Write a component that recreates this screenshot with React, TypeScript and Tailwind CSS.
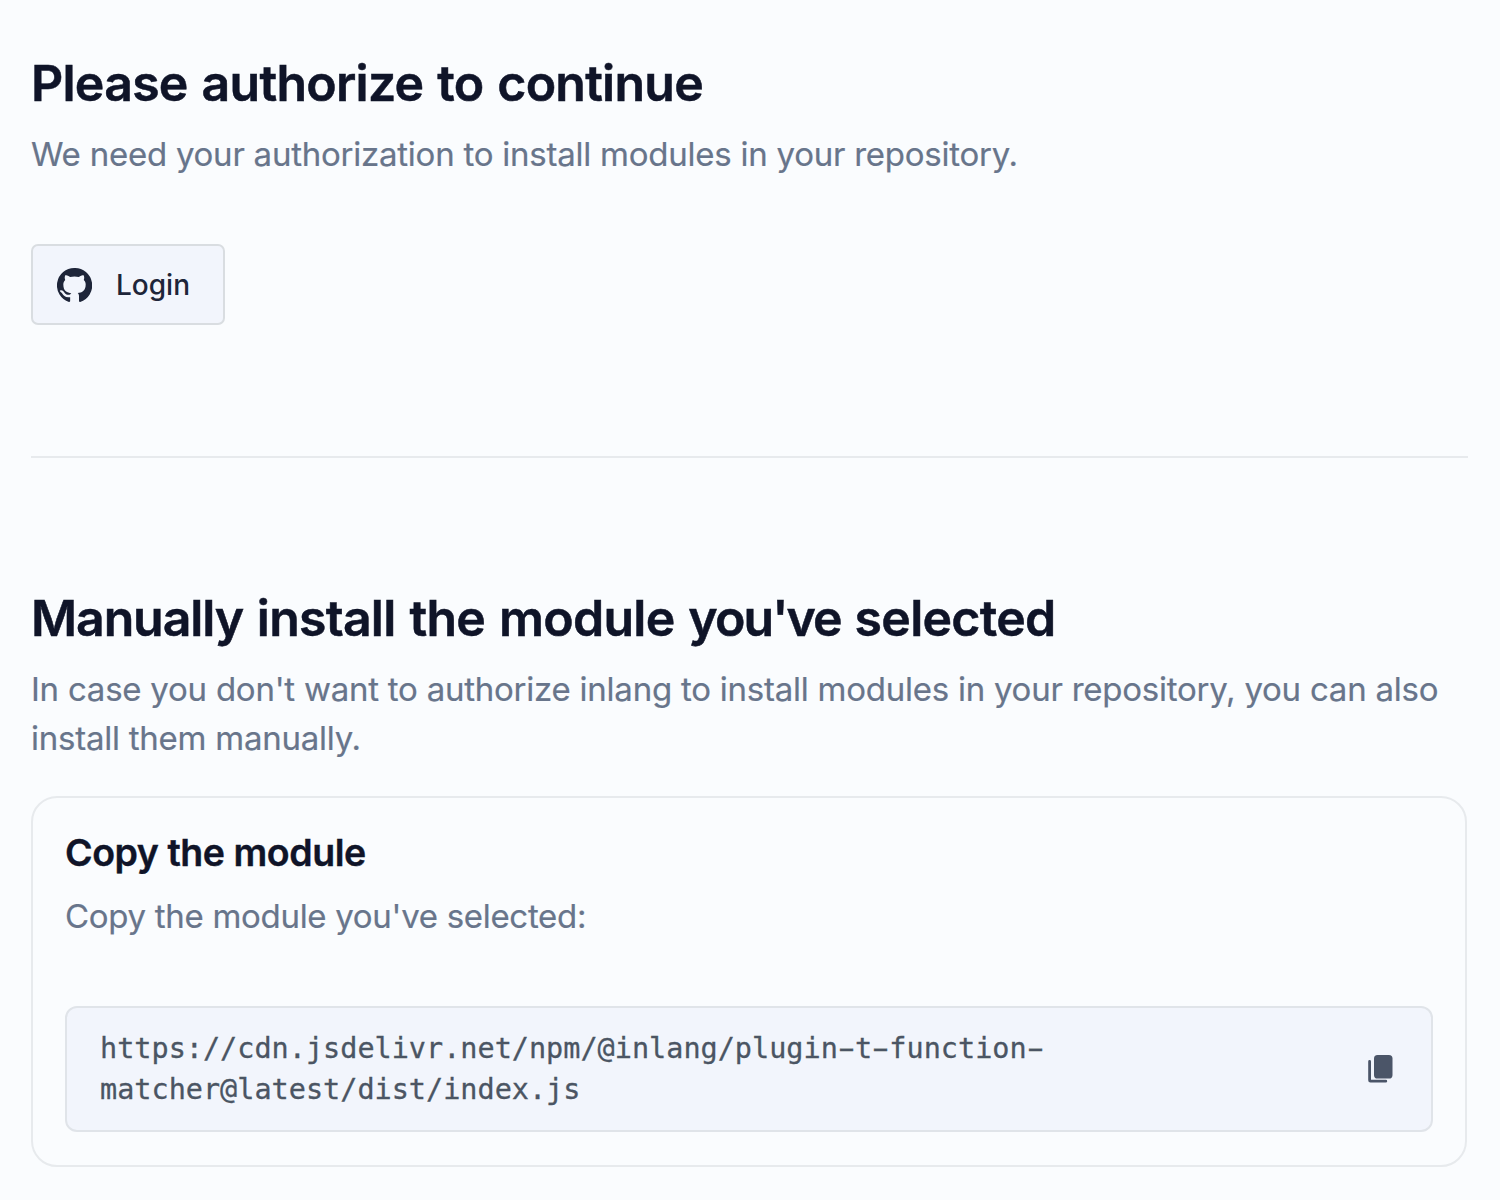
import type { ReactNode } from "react";

function Heading({ title, children }: { title: ReactNode; children: ReactNode }) {
  return (
    <div>
      <h2 className="text-[50px] leading-[60px] font-semibold tracking-[-0.74px] whitespace-nowrap text-[#0f1428] [word-spacing:2px] [-webkit-text-stroke:0.5px_#0f1428]">{title}</h2>
      <p className="mt-[17px] text-[33px] leading-[49px] tracking-[-0.24px] text-[#68758b] [-webkit-text-stroke:0.2px_#68758b]">{children}</p>
    </div>
  );
}

function Dash() {
  return <span className="inline-block scale-x-[1.75]">-</span>;
}

export default function App() {
  return (
    <main className="h-[1200px] w-[1500px] overflow-hidden bg-[#fafcfe] pt-[53px] pr-[32px] pl-[31px] font-[Inter,sans-serif]">
      <Heading title="Please authorize to continue">
        <span className="whitespace-nowrap">We need your authorization to install modules in your repository.</span>
      </Heading>
      <button className="mt-[65px] flex h-[81px] w-[194px] items-center rounded-[7px] border-2 border-[#d9dde1] bg-[#f2f5fc] pl-[24px] text-[28px] font-medium text-[#1e2539]">
        <svg viewBox="1 1.27 22 21.48" className="h-[34px] w-[35px] fill-current">
          <path d="M12 1.27a11 11 0 0 0-3.48 21.46c.55.09.73-.28.73-.55v-2.5c-3 .5-4.1-.9-4.9-2.1-.5-.8-.9-1.1-1.4-1.5-.5-.5 0-.8.6-.7 1.2.1 1.8 1 2.4 1.8.9 1.1 2 1.2 3.3.9A2 2 0 0 1 9.98 17.13c-2.47-.27-5.04-1.19-5.04-5.5 0-1.1.46-2.1 1.2-2.84a3.76 3.76 0 0 1 0-2.93s.91-.28 3.11 1.1c1.8-.49 3.7-.49 5.5 0 2.1-1.38 3.02-1.1 3.02-1.1a3.76 3.76 0 0 1 .1 2.93c.83.74 1.2 1.74 1.2 2.94 0 4.21-2.57 5.13-5.04 5.4.45.37.82.92.82 2.02v3.03c0 .27.1.64.73.55A11 11 0 0 0 12 1.27" />
        </svg>
        <span className="ml-[24px]">Login</span>
      </button>
      <hr className="mt-[131px] mb-[130px] border-t-2 border-[#e7eaed]" />
      <Heading
        title={
          <>
            <span className="tracking-[-1.1px]">Manually</span> install the module{" "}
            <span className="tracking-[-1.9px]">you've</span> selected
          </>
        }
      >
        <span className="whitespace-nowrap">In case you don't want to authorize inlang to install modules in your repository, you can also</span>
        <br />
        install them manually.
      </Heading>
      <section className="mt-[33px] mr-px h-[371px] rounded-[26px] border-2 border-[#e7eaed] px-[32px] pt-[29px]">
        <h3 className="text-[37.5px] leading-[52px] font-semibold tracking-[-0.45px] text-[#0f1428] [-webkit-text-stroke:0.4px_#0f1428]">Copy the module</h3>
        <p className="mt-[13px] text-[33px] leading-[49px] tracking-[-0.3px] text-[#68758b] [-webkit-text-stroke:0.2px_#68758b]">Copy the module you've selected:</p>
        <div className="mt-[65px] flex h-[126px] items-center justify-between rounded-[12px] border-2 border-[#e0e4e9] bg-[#f2f5fc] pr-[35px] pl-[33px]">
          <code className="font-['DejaVu_Sans_Mono',monospace] text-[28.5px] leading-[41px] whitespace-nowrap text-[#4b5563] [-webkit-text-stroke:0.3px_#4b5563]">
            https://cdn.jsdelivr.net/npm/@inlang/plugin
            <Dash />t<Dash />
            function
            <Dash />
            <br />
            matcher@latest/dist/index.js
          </code>
          <svg viewBox="0 0 32 32" className="size-[32px] fill-[#4b5568]">
            <rect x="10" y="2" width="18.5" height="23.5" rx="3.6" />
            <path d="M4.2 8.5a1.4 1.4 0 0 1 2.8 0v18.3h14.8a1.4 1.4 0 0 1 0 2.8H6.5a2.3 2.3 0 0 1-2.3-2.3z" />
          </svg>
        </div>
      </section>
    </main>
  );
}
